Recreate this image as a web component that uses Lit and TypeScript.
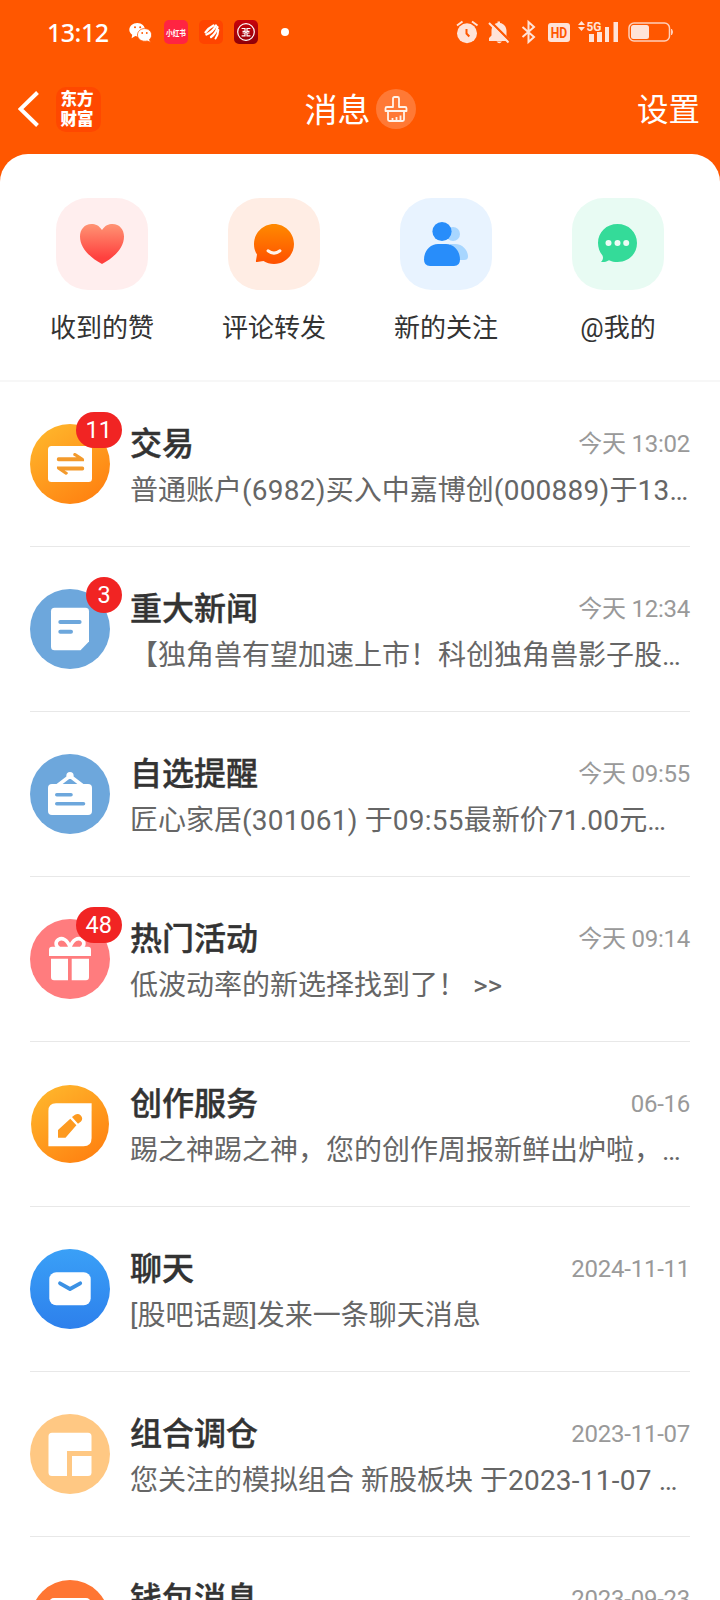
import { LitElement, html, svg, css, nothing, type TemplateResult } from "lit";
import { customElement } from "lit/decorators.js";

interface Message {
  icon: TemplateResult;
  title: string;
  time: string;
  preview: string;
  badge?: string;
}

const disc = (fill: string, r = 40) => svg`<circle cx="40" cy="40" r=${r} fill=${fill}/>`;

const orangeGradient = (id: string) => svg`
  <linearGradient id=${id} x1="0.15" y1="0.05" x2="0.8" y2="1">
    <stop offset="0" stop-color="#ffb52b"/><stop offset="1" stop-color="#ff8010"/>
  </linearGradient>`;

const icons = {
  trade: svg`${orangeGradient("trade")}${disc("url(#trade)")}
    <rect x="18" y="22" width="44" height="36" rx="3.5" fill="#fff"/>
    <g fill="#f39a2c">
      <path d="M28.500 33.200H46.500L43.400 31.400Q42.600 29.600 44.200 29Q45 28.700 45.800 29.200L53.500 34.300Q54.400 35.200 54 37.200H28.500Q26.800 37.200 26.800 35.200Q26.800 33.200 28.500 33.200Z"/>
      <path d="M52.500 46.400H34.500L37.600 48.200Q38.400 50 36.800 50.600Q36 50.900 35.200 50.400L27.500 45.300Q26.600 44.400 27 42.400H52.500Q54.200 42.400 54.200 44.400Q54.200 46.400 52.500 46.400Z"/>
    </g>`,
  news: svg`${disc("#6da7dc")}
    <path d="M24.500 18.700H55.500Q59 18.700 59 22.200V52.500L50.500 61.200H24.500Q21 61.200 21 57.700V22.200Q21 18.700 24.500 18.700Z" fill="#fff"/>
    <path d="M30.300 33H49.600M30.300 42.700H41" stroke="#6da7dc" stroke-width="4" stroke-linecap="round"/>`,
  watch: svg`${disc("#6da7dc")}
    <circle cx="40" cy="21.500" r="3.600" fill="#fff"/>
    <path d="M27 32L40 22L53 32" fill="none" stroke="#fff" stroke-width="3.600"/>
    <rect x="18" y="30" width="44" height="31" rx="4" fill="#fff"/>
    <path d="M26.800 40.700H41M26.800 49.700H53.500" stroke="#6da7dc" stroke-width="3.600" stroke-linecap="round"/>`,
  gift: svg`${disc("#ff7c7e")}
    <path d="M40 28C37 20 32 18.500 28.500 20.500C25 23 25.500 27 29 29M40 28C43 20 48 18.500 51.500 20.500C55 23 54.500 27 51 29" fill="none" stroke="#fff" stroke-width="3.600"/>
    <path d="M22 27.700H58Q61 27.700 61 30.700V37H19V30.700Q19 27.700 22 27.700Z" fill="#fff"/>
    <path d="M21 39.700H38V61.200H24Q21 61.200 21 58.200ZM41.700 39.700H59V58.200Q59 61.200 56 61.200H41.700Z" fill="#fff"/>`,
  create: svg`${orangeGradient("create")}${disc("url(#create)", 39)}
    <path d="M26 19.300H61.600V54Q61.600 62.300 53.500 62.300H18.400V27Q18.400 19.300 26 19.300Z" fill="#fff"/>
    <path d="M28 46L40.300 34.800L46.400 41.300L35.500 53.700H28Z M42 33L45 30.800Q48 28.800 50.800 31.400Q53.500 34.500 51 37.500L48 39.800Z" fill="#fd9a20"/>`,
  chat: svg`
    <linearGradient id="chat" x1="0" y1="0" x2="0" y2="1">
      <stop offset="0" stop-color="#3aa0f7"/><stop offset="1" stop-color="#2d80ec"/>
    </linearGradient>${disc("url(#chat)")}
    <rect x="19.300" y="23.300" width="41.400" height="33" rx="7" fill="#fff"/>
    <path d="M30 34.300L40 40L50.200 34.300" fill="none" stroke="#3b91e4" stroke-width="3.800" stroke-linecap="round" stroke-linejoin="round"/>`,
  portfolio: svg`${disc("#ffc883")}
    <path d="M22 18.700H58Q61.500 18.700 61.500 22.200V37H37V62H22Q18.500 62 18.500 58.500V22.200Q18.500 18.700 22 18.700Z" fill="#fff"/>
    <path d="M42 42H61.500V58.500Q61.500 62 58 62H42Z" fill="#fff"/>`,
  wallet: svg`${disc("#ff7633", 39)}
    <rect x="19" y="19" width="42" height="42" rx="5" fill="#fff"/>
    <path d="M40 34H61V46H40Z" fill="#ff7633"/>`,
};

const messages: Message[] = [
  { icon: icons.trade, title: "交易", time: "今天 13:02", preview: "普通账户(6982)买入中嘉博创(000889)于13…", badge: "11" },
  { icon: icons.news, title: "重大新闻", time: "今天 12:34", preview: "【独角兽有望加速上市！科创独角兽影子股…", badge: "3" },
  { icon: icons.watch, title: "自选提醒", time: "今天 09:55", preview: "匠心家居(301061) 于09:55最新价71.00元…" },
  { icon: icons.gift, title: "热门活动", time: "今天 09:14", preview: "低波动率的新选择找到了！ >>", badge: "48" },
  { icon: icons.create, title: "创作服务", time: "06-16", preview: "踢之神踢之神，您的创作周报新鲜出炉啦，…" },
  { icon: icons.chat, title: "聊天", time: "2024-11-11", preview: "[股吧话题]发来一条聊天消息" },
  { icon: icons.portfolio, title: "组合调仓", time: "2023-11-07", preview: "您关注的模拟组合 新股板块 于2023-11-07 …" },
  { icon: icons.wallet, title: "钱包消息", time: "2023-09-23", preview: "" },
];

const shortcuts = [
  {
    label: "收到的赞",
    art: svg`<linearGradient id="heart" x1="0" y1="0" x2="0" y2="1"><stop offset="0" stop-color="#ff9474"/><stop offset="0.85" stop-color="#ff403e"/></linearGradient>
      <rect width="92" height="92" rx="32" fill="#ffeeee"/>
      <path d="M46 32C43 27.500 39.500 26 35.500 26C28.500 26 24 31.500 24 38.500C24 50 34 59.500 46 66C58 59.500 68 50 68 38.500C68 31.500 63.500 26 56.500 26C52.500 26 49 27.500 46 32Z" fill="url(#heart)"/>`,
  },
  {
    label: "评论转发",
    art: svg`<linearGradient id="smile" x1="0" y1="0" x2="0" y2="1"><stop offset="0" stop-color="#ff8a00"/><stop offset="1" stop-color="#ff5000"/></linearGradient>
      <rect width="92" height="92" rx="32" fill="#ffede4"/>
      <path d="M46 26C57 26 66 35 66 46C66 57 57 66 46 66C42 66 38.500 65 35.500 63L29 64Q27.500 64 28 62.500L29 56.500C27 53.500 26 50 26 46C26 35 35 26 46 26Z" fill="url(#smile)"/>
      <path d="M40 52.800Q46 57.500 52 52.800" fill="none" stroke="#fff3ec" stroke-width="3" stroke-linecap="round"/>`,
  },
  {
    label: "新的关注",
    art: svg`<rect width="92" height="92" rx="32" fill="#e8f3ff"/>
      <g fill="#a8d6ff"><circle cx="53" cy="36" r="7"/><path d="M50 46H55C63 46 68 53 68 58.500Q68 62 64 62H50Z"/></g>
      <circle cx="42" cy="33.500" r="9.600" fill="#288dfa"/>
      <path d="M38 46H46C54 46 60 53 60 61.500Q60 68 54 68H30Q24 68 24 61.500C24 53 30 46 38 46Z" fill="#288dfa"/>`,
  },
  {
    label: "@我的",
    art: svg`<rect width="92" height="92" rx="32" fill="#e8fbf3"/>
      <path d="M45.500 26C56.500 26 65 34 65 45C65 56 56.500 64 45.500 64C42.500 64 39.500 63.500 37 62.200C34.500 63.800 32 64.200 29 64C31 62 31.500 60 30.500 57.500C27.500 54 26 49.500 26 45C26 34 34.500 26 45.500 26Z" fill="#34db99"/>
      <g fill="#eefcf6"><circle cx="36.500" cy="45" r="3"/><circle cx="45.500" cy="45" r="3"/><circle cx="54.200" cy="45" r="3"/></g>`,
  },
];

@customElement("status-bar")
class StatusBar extends LitElement {
  static styles = css`
    :host { display: flex; height: 64px; box-sizing: border-box; padding: 0 47px; align-items: center; justify-content: space-between; color: #fff; }
    svg { display: block; }
    .side { display: flex; align-items: center; }
    .clock { width: 82px; font: 500 25px/32px "Noto Sans", "Roboto", sans-serif; letter-spacing: -0.5px; }
    .apps { display: flex; gap: 11px; }
    .dot { width: 8px; height: 8px; border-radius: 50%; background: #fff; margin-left: 23px; }
    .tiny { font: 700 8.500px "Noto Sans CJK SC", sans-serif; }
    .hd { font: 700 15.500px "Roboto", sans-serif; }
    .net { font: 700 13px "Roboto", sans-serif; }
  `;
  render() {
    return html`
      <div class="side">
        <div class="clock">13:12</div>
        <div class="apps">
          <svg width="24" height="24" viewBox="0 0 24 24">
            <path d="M8.300 3C12.800 3 16 6 16 9.800C16 13.600 12.800 16.400 8.300 16.400L6.300 16.100L2.600 18.200L3.200 14.800C1.500 13.500 0.300 11.800 0.300 9.800C0.300 6 3.800 3 8.300 3Z" fill="#fff"/>
            <path d="M15.500 8.600C19.700 8.600 22.600 11.500 22.600 15C22.600 16.800 21.800 18.300 20.500 19.500L21.500 22.300L18.200 21C13 22.200 8.500 19.200 8.500 15C8.500 11.500 11.500 8.600 15.500 8.600Z" fill="#fff" stroke="#ff5700" stroke-width="0.800"/>
            <g fill="#ff5700"><circle cx="6" cy="7.300" r="1"/><circle cx="11.200" cy="7.300" r="1"/><circle cx="13.200" cy="13" r="0.900"/><circle cx="17.800" cy="13" r="0.900"/></g>
          </svg>
          <svg width="24" height="24" viewBox="0 0 24 24">
            <rect width="24" height="24" rx="5" fill="#ff2442"/>
            <text class="tiny" x="12" y="15.500" text-anchor="middle" textLength="20" lengthAdjust="spacingAndGlyphs" fill="#fff">小红书</text>
          </svg>
          <svg width="24" height="24" viewBox="0 0 24 24">
            <rect width="24" height="24" rx="5" fill="#ff4400"/>
            <g fill="none" stroke="#fff" stroke-linecap="round">
              <path d="M14.500 5.500C11.500 7 8.500 9.500 6.500 12.300" stroke-width="2.300"/>
              <path d="M17 5.500C15 9.500 11.500 13 7.500 14.500" stroke-width="2.400"/>
              <path d="M18.500 7C17.500 11.500 15.500 14.500 12 17" stroke-width="2.300"/>
              <path d="M19.300 10C19.200 13.500 18 16.500 16.500 18.500" stroke-width="2"/>
            </g>
          </svg>
          <svg width="24" height="24" viewBox="0 0 24 24">
            <linearGradient id="bank" x1="0" y1="0" x2="0" y2="1"><stop offset="0" stop-color="#c9040c"/><stop offset="1" stop-color="#8e0008"/></linearGradient>
            <rect width="24" height="24" rx="5" fill="url(#bank)"/>
            <g fill="none" stroke="#fff" stroke-width="1.200">
              <circle cx="12" cy="12" r="8.300"/>
              <path d="M7.600 8.500H11V11.300H8.500M16.400 8.500H13V11.300H15.500M7.600 15.800H11V13H8.500M16.400 15.800H13V13H15.500M11 12.100H13"/>
            </g>
          </svg>
        </div>
        <div class="dot"></div>
      </div>
      <svg width="218" height="26" viewBox="455 19 218 26">
        <g fill="#ffe3d8">
          <circle cx="467" cy="33.300" r="10"/>
          <path d="M457 25.500L462.500 21.500M477.500 25.500L472 21.500" stroke="#ffe3d8" stroke-width="2"/>
          <path d="M466.500 29V33.500L469.300 36.500" fill="none" stroke="#ff5700" stroke-width="2"/>
          <path d="M489 41V38L491.500 35.500V31C491.500 26.500 494 23.500 497.500 23V21.500H500V23C504 23.500 506.500 27 506.500 31V36L509.500 39V41Z M496.500 41.500H502Q499.300 45 496.500 41.500Z"/>
          <path d="M490.500 21.500L511 42" stroke="#ff5700" stroke-width="2.400"/>
          <path d="M489 23L508.500 42.500" stroke="#ffe3d8" stroke-width="2"/>
          <path d="M522.500 27L534 37L528.500 42V22L534 27L522.500 37" fill="none" stroke="#ffe3d8" stroke-width="2"/>
          <rect x="548" y="23" width="22" height="19" rx="3"/>
          <text class="hd" x="559" y="38.100" text-anchor="middle" textLength="16.500" lengthAdjust="spacingAndGlyphs" fill="#ff5700">HD</text>
          <path d="M578 25L581.500 21L585 25ZM578 27L581.500 31L585 27Z"/>
          <text class="net" x="586.500" y="30.800" textLength="15" lengthAdjust="spacingAndGlyphs">5G</text>
          <path d="M589 34H594V42H589ZM597 32H602V42H597ZM605 27H609V42H605ZM613.500 22H618V42H613.500Z"/>
          <rect x="629" y="23" width="40.500" height="18" rx="5" fill="none" stroke="#ffd0bb" stroke-width="1.500"/>
          <path d="M671.500 29Q673.500 32 671.500 35Z" stroke="#ffd0bb"/>
          <rect x="631" y="25" width="18" height="14" rx="2.500"/>
        </g>
      </svg>`;
  }
}

@customElement("message-row")
class MessageRow extends LitElement {
  static properties = { message: { attribute: false } };
  declare message: Message;
  static styles = css`
    :host { display: block; padding: 0 30px; }
    .row { display: flex; gap: 20px; height: 164px; border-bottom: 1px solid #e8e8e8; }
    .icon { position: relative; flex: none; width: 80px; height: 80px; margin-top: 42px; }
    .icon svg { display: block; }
    .badge { position: absolute; top: -12px; right: -12px; box-sizing: border-box; min-width: 36px; height: 36px; padding: 0 10px; border-radius: 18px; background: #f12423; color: #fff; text-align: center; font: 23.500px/36px "Roboto", sans-serif; }
    .body { flex: 1; min-width: 0; padding-top: 42px; }
    .head { display: flex; justify-content: space-between; align-items: flex-start; height: 38px; }
    .title { font-size: 32px; line-height: 41px; font-weight: 500; color: #333; -webkit-text-stroke: 0.4px #333; }
    .time { font-size: 24px; line-height: 41px; color: #999; letter-spacing: -0.250px; }
    .preview { height: 40px; line-height: 40px; margin-top: 9px; font-size: 28px; color: #666; white-space: nowrap; overflow: hidden; }
    .latin { letter-spacing: 0.250px; }
  `;
  render() {
    const m = this.message;
    const parts = m.preview.split(/([0-9():.\-]+)/);
    return html`
      <div class="row">
        <div class="icon">
          <svg width="80" height="80" viewBox="0 0 80 80">${m.icon}</svg>
          ${m.badge ? html`<div class="badge">${m.badge}</div>` : nothing}
        </div>
        <div class="body">
          <div class="head"><span class="title">${m.title}</span><span class="time">${m.time}</span></div>
          <div class="preview">${parts.map((p, i) => (i % 2 ? html`<span class="latin">${p}</span>` : p))}</div>
        </div>
      </div>`;
  }
}

@customElement("app-root")
class AppRoot extends LitElement {
  static styles = css`
    :host { display: block; width: 720px; height: 1600px; overflow: hidden; background: #ff5700; font-family: "Roboto", "Noto Sans CJK SC", sans-serif; }
    svg { display: block; }
    .nav { display: grid; grid-template-columns: 1fr auto 1fr; align-items: center; height: 90px; box-sizing: border-box; padding: 0 20px 0 18px; color: #fff; font-size: 33px; line-height: 40px; }
    .left { display: flex; align-items: center; gap: 15.500px; }
    .logo { display: grid; place-content: center; width: 45px; height: 45px; border-radius: 10px; background: #ff4800; font: 900 16.500px/19.500px "Noto Sans CJK SC", sans-serif; text-align: center; padding: 0 2px 1px 0; box-sizing: border-box; }
    .title { display: flex; align-items: center; gap: 5px; padding-left: 2px; }
    .title span, .right { padding-top: 4px; }
    .right { text-align: right; font-size: 31.500px; }
    .sheet { background: #fff; border-radius: 28px 28px 0 0; height: 1446px; overflow: hidden; }
    .shortcuts { display: grid; grid-template-columns: repeat(4, 1fr); height: 228px; padding: 44px 16px 0; box-sizing: border-box; border-bottom: 2px solid #f7f7f7; }
    .shortcut { display: flex; flex-direction: column; align-items: center; gap: 19px; }
    .label { font-size: 26px; line-height: 38px; color: #333; }
  `;
  render() {
    return html`
      <status-bar></status-bar>
      <div class="nav">
        <div class="left">
          <svg width="22" height="38" viewBox="0 0 22 38"><path d="M19.500 2.500L2.500 19L19.500 35.500" fill="none" stroke="#fff" stroke-width="4"/></svg>
          <div class="logo"><span>东方<br>财富</span></div>
        </div>
        <div class="title">
          <span>消息</span>
          <svg width="40" height="40" viewBox="0 0 40 40">
            <circle cx="20" cy="20" r="20" fill="#ff7935"/>
            <path d="M17 18V9.500Q17 8 18.500 8H21.500Q23 8 23 9.500V18H29Q30.500 18 30.500 19.500V22H9.500V19.500Q9.500 18 11 18ZM12 22V30.500Q12 32 13.500 32H26.500Q28 32 28 30.500V22M16.500 32V29M20.500 32V28M24.500 32V26.500" fill="none" stroke="#fff3ea" stroke-width="1.800" stroke-linejoin="round"/>
          </svg>
        </div>
        <div class="right">设置</div>
      </div>
      <div class="sheet">
        <div class="shortcuts">
          ${shortcuts.map((s) => html`
            <div class="shortcut"><svg width="92" height="92" viewBox="0 0 92 92">${s.art}</svg><span class="label">${s.label}</span></div>`)}
        </div>
        ${messages.map((m) => html`<message-row .message=${m}></message-row>`)}
      </div>`;
  }
}
